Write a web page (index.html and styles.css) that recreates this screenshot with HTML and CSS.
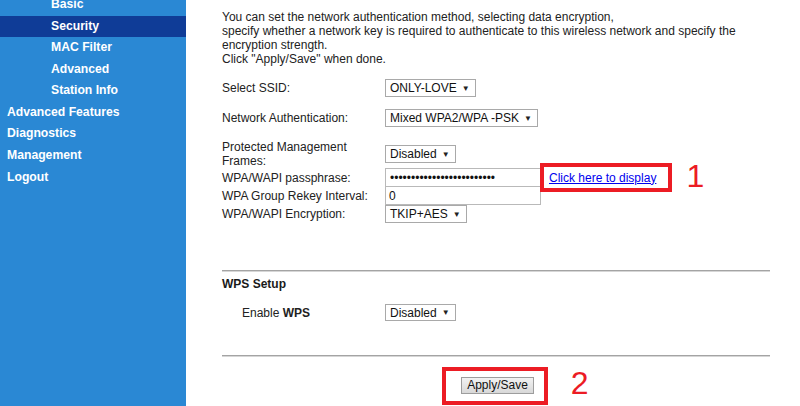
FILE: index.html
```html
<!DOCTYPE html>
<html>
<head>
<meta charset="utf-8">
<link rel="stylesheet" href="styles.css">
</head>
<body>
<div class="page">
  <nav class="sidebar">
    <ul class="menu">
      <li class="item sub">Basic</li>
      <li class="item sub active">Security</li>
      <li class="item sub">MAC Filter</li>
      <li class="item sub">Advanced</li>
      <li class="item sub">Station Info</li>
      <li class="item">Advanced Features</li>
      <li class="item">Diagnostics</li>
      <li class="item">Management</li>
      <li class="item">Logout</li>
    </ul>
  </nav>
  <main class="content">
    <p class="intro">You can set the network authentication method, selecting data encryption,<br>specify whether a network key is required to authenticate to this wireless network and specify the encryption strength.<br>Click "Apply/Save" when done.</p>

    <div class="form">
      <div class="row r-ssid">
        <span class="label">Select SSID:</span>
        <span class="control"><span class="select">ONLY-LOVE<span class="caret">▼</span></span></span>
      </div>
      <div class="row r-auth">
        <span class="label">Network Authentication:</span>
        <span class="control"><span class="select">Mixed WPA2/WPA -PSK<span class="caret">▼</span></span></span>
      </div>
      <div class="row r-pmf">
        <span class="label">Protected Management Frames:</span>
        <span class="control"><span class="select">Disabled<span class="caret">▼</span></span></span>
      </div>
      <div class="row r-pass">
        <span class="label">WPA/WAPI passphrase:</span>
        <span class="control">
          <span class="input dots">•••••••••••••••••••••••••</span>
          <span class="callout link-callout"><a class="link" href="#">Click here to display</a><span class="marker m1">1</span></span>
        </span>
      </div>
      <div class="row r-rekey">
        <span class="label">WPA Group Rekey Interval:</span>
        <span class="control"><span class="input">0</span></span>
      </div>
      <div class="row r-enc">
        <span class="label">WPA/WAPI Encryption:</span>
        <span class="control"><span class="select">TKIP+AES<span class="caret">▼</span></span></span>
      </div>
    </div>

    <div class="rule rule-top"></div>
    <h3 class="section-title">WPS Setup</h3>
    <div class="row r-wps">
      <span class="label indent">Enable <b>WPS</b></span>
      <span class="control"><span class="select">Disabled<span class="caret">▼</span></span></span>
    </div>
    <div class="rule rule-bottom"></div>

    <div class="actions">
      <span class="callout button-callout"><button class="button" type="button">Apply/Save</button><span class="marker m2">2</span></span>
    </div>
  </main>
</div>
</body>
</html>
```

FILE: styles.css
```css
html, body {
  margin: 0;
  padding: 0;
  background: #ffffff;
  overflow: hidden;
}

body {
  font-family: "Liberation Sans", Arial, sans-serif;
  font-size: 12px;
  color: #222222;
}

.page {
  display: flex;
  width: 800px;
  height: 406px;
}

.sidebar {
  width: 186px;
  flex: 0 0 186px;
  background: #2a88d4;
  overflow: hidden;
}

.menu {
  list-style: none;
  margin: -6px 0 0 0;
  padding: 0;
}

.item {
  height: 21.57px;
  line-height: 21.57px;
  padding-left: 7px;
  color: #ffffff;
  font-weight: bold;
  font-size: 12.2px;
  white-space: nowrap;
}

.item.sub {
  padding-left: 51px;
}

.item.active {
  background: #0f3c97;
}

.content {
  width: 548px;
  padding: 10px 0 0 36px;
}

.intro {
  margin: 0;
  line-height: 14px;
}

.form {
  margin-top: 13px;
}

.row {
  display: grid;
  grid-template-columns: 163px 1fr;
  align-items: center;
}

.label {
  line-height: 14px;
}

.control {
  display: flex;
  align-items: center;
}

.r-auth { margin-top: 12px; }
.r-pmf { margin-top: 13px; }
.r-pass { margin-top: 0; }
.r-rekey { margin-top: -1px; }

.select {
  display: inline-flex;
  align-items: center;
  gap: 5px;
  height: 18px;
  box-sizing: border-box;
  padding: 0 5px 0 4px;
  border: 1px solid #a9a9a9;
  background: #ffffff;
  color: #111111;
  font-size: 12px;
  white-space: nowrap;
}

.caret {
  font-size: 8px;
  color: #222;
}

.input {
  display: inline-flex;
  align-items: center;
  width: 156px;
  height: 19px;
  box-sizing: border-box;
  padding: 0 3px;
  border: 1px solid #b9b9b9;
  background: #fff;
  color: #111;
  font-size: 12px;
}

.input.dots {
  padding-left: 4px;
  font-size: 12px;
  overflow: hidden;
}

.callout {
  position: relative;
  display: inline-flex;
  align-items: center;
  border: 4.5px solid #ec1c24;
  background: #fff;
}

.link-callout {
  height: 29px;
  box-sizing: border-box;
  margin: -5px 0 -5px -1px;
  padding: 0 12px 0 5px;
}

.link {
  color: #0000ee;
  text-decoration: underline;
  font-size: 12px;
}

.marker {
  position: absolute;
  color: #ec1c24;
  font-family: "Liberation Sans", Arial, sans-serif;
  font-size: 32px;
  line-height: 32px;
}

.m1 {
  left: calc(100% + 18px);
  top: -7px;
}

.m2 {
  left: calc(100% + 27px);
  top: -4px;
}

.rule {
  height: 1px;
  background: #a4a4a4;
  box-shadow: 0 1px 0 #d6d6d6;
}

.rule-top {
  margin-top: 47px;
}

.section-title {
  margin: 6px 0 0 0;
  font-size: 12px;
  line-height: 14px;
  font-weight: bold;
  color: #1a1a1a;
}

.r-wps {
  margin-top: 13px;
}

.r-wps .select {
  height: 17px;
}

.indent {
  padding-left: 20px;
}

.rule-bottom {
  margin-top: 34px;
}

.actions {
  display: flex;
  justify-content: center;
  margin-top: 11px;
  padding-right: 2px;
}

.button-callout {
  padding: 6px 10px 7px 15px;
}

.button {
  height: 17px;
  padding: 0 5px;
  border: 1px solid #9d9d9d;
  border-radius: 0;
  background: linear-gradient(#f2f2f2, #d8d8d8);
  font-family: "Liberation Sans", Arial, sans-serif;
  font-size: 12px;
  line-height: 15px;
  color: #111;
}
```
